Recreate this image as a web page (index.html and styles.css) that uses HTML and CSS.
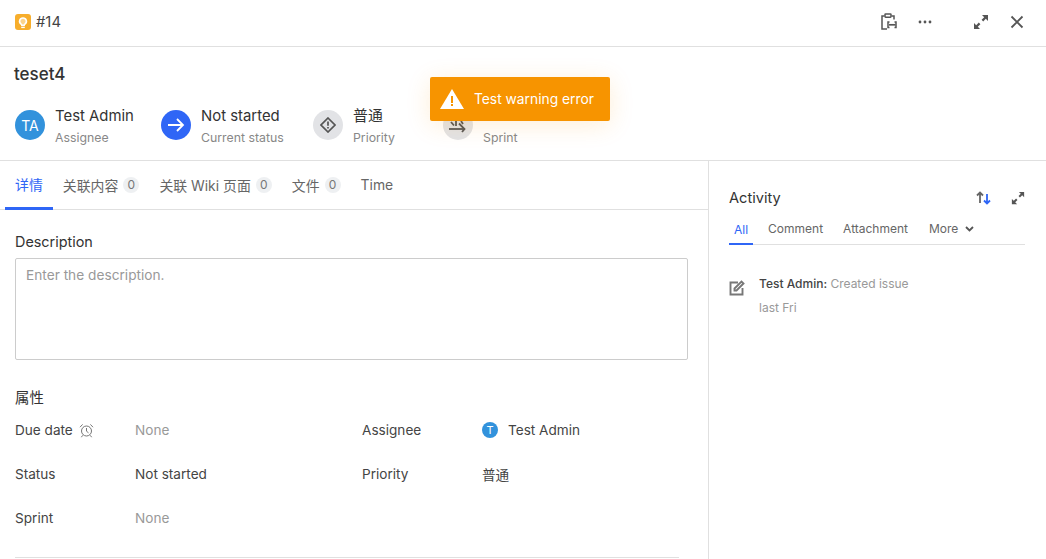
FILE: index.html
```html
<!DOCTYPE html>
<html lang="en">
<head>
    <meta charset="UTF-8">
    <meta name="viewport" content="width=device-width, initial-scale=1.0">
    <title>#14 teset4</title>
    <link rel="stylesheet" href="styles.css">
</head>
<body>
    <div class="topbar">
        <div class="issue-id">
            <span class="type-icon">
                <svg width="12" height="13" viewBox="0 0 12 13" fill="none" stroke="#fff"><path d="M6 2a3.3 3.3 0 0 0-2 6c.5.4.7.7.8 1.2h2.4c.1-.5.3-.8.8-1.2a3.3 3.3 0 0 0-2-6z" stroke-width="1.6" fill="#fbd48c"/><path d="M4.2 11.4h3.6" stroke-width="1.4"/></svg>
            </span>
            #14
        </div>
        <div class="top-actions">
            <svg class="act-clip" width="18" height="18" viewBox="0 0 18 18" fill="none" stroke="#555" stroke-width="1.5"><path d="M4.5 3H2v13h5"/><path d="M11.5 3H14v3.5"/><rect x="5" y="1" width="6" height="3.2" rx=".6"/><path d="M9.5 9H8v5.5h1.5M14.5 9H16v5.5h-1.5"/><path d="M9 11.8h6.5" stroke-width="1.7"/></svg>
            <svg class="act-more" width="14" height="4" viewBox="0 0 14 4" fill="#555"><circle cx="2" cy="2" r="1.4"/><circle cx="7" cy="2" r="1.4"/><circle cx="12" cy="2" r="1.4"/></svg>
            <svg class="act-expand" width="16" height="16" viewBox="0 0 16 16" fill="#555"><path d="M15 1v6l-2.2-2.2-2.6 2.6-1.6-1.6 2.6-2.6L9 1z"/><path d="M1 15V9l2.2 2.2 2.6-2.6 1.6 1.6-2.6 2.6L7 15z"/></svg>
            <svg class="act-close" width="14" height="14" viewBox="0 0 14 14" stroke="#555" stroke-width="1.8"><path d="M1.5 1.5l11 11M12.5 1.5l-11 11"/></svg>
        </div>
    </div>

    <div class="summary">
        <h1>teset4</h1>
        <div class="meta-row">
            <div class="meta meta-assignee">
                <span class="meta-icon bg-avatar">TA</span>
                <div class="meta-text"><div class="meta-value">Test Admin</div><div class="meta-label">Assignee</div></div>
            </div>
            <div class="meta meta-status">
                <span class="meta-icon bg-blue">
                    <svg width="18" height="16" viewBox="0 0 18 16" fill="none" stroke="#fff" stroke-width="1.8"><path d="M1 8h15M10 2l6 6-6 6"/></svg>
                </span>
                <div class="meta-text"><div class="meta-value">Not started</div><div class="meta-label">Current status</div></div>
            </div>
            <div class="meta meta-priority">
                <span class="meta-icon bg-grey">
                    <svg width="16" height="16" viewBox="0 0 16 16" fill="none" stroke="#555" stroke-width="1.7"><path d="M8 1l7 7-7 7-7-7z"/><path d="M8 4.5v4.2M8 10v1.6"/></svg>
                </span>
                <div class="meta-text"><div class="meta-value">普通</div><div class="meta-label">Priority</div></div>
            </div>
            <div class="meta meta-sprint">
                <span class="meta-icon bg-grey">
                    <svg width="20" height="18" viewBox="0 0 20 18" fill="none" stroke="#555" stroke-width="1.8"><path d="M1 13h15"/><path d="M11 7.5l5.5 5.5-2.5 3"/><path d="M3 6l3 3.5M8 5v5M13 5l2 3"/></svg>
                </span>
                <div class="meta-text"><div class="meta-value">&nbsp;</div><div class="meta-label">Sprint</div></div>
            </div>
        </div>
    </div>

    <div class="toast">
        <svg width="24" height="20" viewBox="0 0 24 20"><path d="M12 0l12 20H0z" fill="#fff"/><path d="M11 7h2v7h-2zM11 15h2v2h-2z" fill="#f79400"/></svg>
        <span>Test warning error</span>
    </div>

    <div class="columns">
        <div class="main">
            <div class="tabs">
                <div class="tab active">详情</div>
                <div class="tab">关联内容<span class="count">0</span></div>
                <div class="tab">关联 Wiki 页面<span class="count">0</span></div>
                <div class="tab">文件<span class="count">0</span></div>
                <div class="tab">Time</div>
            </div>
            <div class="main-body">
                <div class="section-title">Description</div>
                <div class="desc-box">Enter the description.</div>
                <div class="section-title attrs-title">属性</div>
                <div class="attrs">
                    <div class="attr-key">Due date
                        <svg width="15" height="15" viewBox="0 0 15 15" fill="none" stroke="#666" stroke-width=".9"><circle cx="7.5" cy="8" r="5"/><path d="M7.5 5v3.2l2 1.6M1 4.2l2.6-2.8M14 4.2l-2.6-2.8M3.6 12.4l-1.2 1.8M11.4 12.4l1.2 1.8"/></svg>
                    </div>
                    <div class="attr-val muted">None</div>
                    <div class="attr-key">Assignee</div>
                    <div class="attr-val"><span class="mini-avatar">T</span>Test Admin</div>
                    <div class="attr-key">Status</div>
                    <div class="attr-val">Not started</div>
                    <div class="attr-key">Priority</div>
                    <div class="attr-val">普通</div>
                    <div class="attr-key">Sprint</div>
                    <div class="attr-val muted">None</div>
                </div>
                <div class="divider"></div>
            </div>
        </div>
        <div class="side">
            <div class="side-head">
                <span class="side-title">Activity</span>
                <div class="side-actions">
                    <svg width="16" height="14" viewBox="0 0 16 14" fill="none" stroke-width="1.8"><path d="M4 12V2M1 4.5l3-3 3 3" stroke="#666"/><path d="M11 3v9.5M8 9.5l3 3 3-3" stroke="#2f66f6"/></svg>
                    <svg width="14" height="14" viewBox="0 0 16 16" fill="#555"><path d="M15 1v6l-2.2-2.2-2.6 2.6-1.6-1.6 2.6-2.6L9 1z"/><path d="M1 15V9l2.2 2.2 2.6-2.6 1.6 1.6-2.6 2.6L7 15z"/></svg>
                </div>
            </div>
            <div class="side-tabs">
                <div class="side-tab active">All</div>
                <div class="side-tab">Comment</div>
                <div class="side-tab">Attachment</div>
                <div class="side-tab">More
                    <svg width="9" height="6" viewBox="0 0 9 6" fill="none" stroke="#555" stroke-width="1.8"><path d="M1 1l3.5 3.5L8 1"/></svg>
                </div>
            </div>
            <div class="activity">
                <svg width="16" height="16" viewBox="0 0 16 16" fill="none" stroke="#777" stroke-width="1.9"><path d="M9 2.5H1.5v12h12V8"/><path d="M5.5 8.5L12.5 1.5l2 2-7 7H5.5z"/></svg>
                <div>
                    <div class="activity-line"><b>Test Admin:</b> Created issue</div>
                    <div class="activity-time">last Fri</div>
                </div>
            </div>
        </div>
    </div>
</body>
</html>
```

FILE: styles.css
```css
html, body {
    height: 100%;
}
body {
    margin: 0;
    font-family: Inter, "Noto Sans CJK SC", sans-serif;
    font-size: 14px;
    color: #333;
    background: #fff;
    overflow: hidden;
    position: relative;
}
.topbar {
    height: 44px;
    padding: 0 22px 2px 15px;
    border-bottom: 1px solid #e0e0e0;
    display: flex;
    align-items: center;
    justify-content: space-between;
}
.issue-id {
    display: flex;
    align-items: center;
    gap: 5px;
    font-size: 14.8px;
    color: #444;
}
.type-icon {
    width: 16px;
    height: 16px;
    background: #f7ae2c;
    border-radius: 3px;
    display: flex;
    align-items: center;
    justify-content: center;
}
.top-actions {
    display: flex;
    align-items: center;
}
.act-more {
    margin-left: 20px;
}
.act-expand {
    margin-left: 41px;
}
.act-close {
    margin-left: 21px;
}
.summary {
    height: 113px;
    border-bottom: 1px solid #e0e0e0;
    padding: 0 14px;
}
h1 {
    margin: 0;
    padding-top: 16px;
    font-size: 17px;
    line-height: 22px;
    font-weight: 500;
    color: #333;
}
.meta-row {
    display: flex;
    margin-top: 19px;
    padding-left: 1px;
}
.meta {
    display: flex;
    align-items: center;
    gap: 10px;
}
.meta-assignee {
    width: 146px;
}
.meta-status {
    width: 152px;
}
.meta-priority {
    width: 130px;
}
.meta-icon {
    width: 30px;
    height: 30px;
    border-radius: 50%;
    display: flex;
    align-items: center;
    justify-content: center;
    flex: none;
}
.bg-avatar {
    background: #3292dc;
    color: #fff;
    font-size: 14px;
}
.bg-blue {
    background: #2f66f6;
}
.bg-grey {
    background: #e2e3e6;
}
.meta-text {
    padding-top: 2px;
}
.meta-value {
    font-size: 14.9px;
    line-height: 20px;
    color: #333;
}
.meta-label {
    font-size: 12.3px;
    line-height: 16px;
    margin-top: 4px;
    color: #888;
}
.toast {
    position: absolute;
    left: 430px;
    top: 77px;
    width: 180px;
    height: 44px;
    box-sizing: border-box;
    padding-left: 10px;
    background: #f79400;
    border-radius: 2px;
    color: #fff;
    font-size: 13.8px;
    display: flex;
    align-items: center;
    gap: 10px;
    box-shadow: 0 4px 24px rgba(247, 148, 0, 0.16);
}
.columns {
    display: flex;
    height: 398px;
}
.main {
    width: 708px;
    flex: none;
    border-right: 1px solid #e0e0e0;
}
.tabs {
    display: flex;
    height: 48px;
    padding-left: 5px;
    border-bottom: 1px solid #e0e0e0;
}
.tab {
    padding: 0 10px 2px;
    display: flex;
    align-items: center;
    font-size: 13.9px;
    color: #666;
    margin-bottom: -1px;
}
.tab.active {
    color: #2f66f6;
    border-bottom: 3px solid #2f66f6;
    padding-bottom: 0;
}
.count {
    margin-left: 5px;
    width: 16px;
    height: 16px;
    border-radius: 50%;
    background: #eef0f2;
    color: #777;
    font-size: 12px;
    text-align: center;
    line-height: 16px;
}
.main-body {
    padding: 23px 20px 0 15px;
}
.section-title {
    font-size: 14.4px;
    line-height: 18px;
    color: #333;
}
.desc-box {
    margin-top: 7px;
    height: 102px;
    box-sizing: border-box;
    border: 1px solid #ccc;
    border-radius: 2px;
    padding: 7px 10px;
    font-size: 13.7px;
    line-height: 18px;
    color: #999;
    width: 673px;
}
.attrs-title {
    margin-top: 29px;
}
.attrs {
    margin-top: 1px;
    display: grid;
    grid-template-columns: 120px 227px 120px 1fr;
    grid-auto-rows: 44px;
}
.attr-key, .attr-val {
    display: flex;
    align-items: center;
    gap: 6px;
    font-size: 13.6px;
    color: #444;
}
.muted {
    color: #999;
}
.mini-avatar {
    width: 16px;
    height: 16px;
    border-radius: 50%;
    background: #3292dc;
    color: #fff;
    font-size: 11px;
    display: flex;
    align-items: center;
    justify-content: center;
    margin-right: 4px;
}
.divider {
    margin-top: 17px;
    border-top: 1px solid #e0e0e0;
    width: 664px;
}
.side {
    flex: 1;
    padding: 0 21px 0 20px;
}
.side-head {
    display: flex;
    align-items: center;
    justify-content: space-between;
    padding-top: 27px;
}
.side-title {
    font-size: 14.6px;
    line-height: 20px;
}
.side-actions {
    display: flex;
    align-items: center;
    gap: 19px;
}
.side-tabs {
    display: flex;
    margin-top: 10px;
    height: 26px;
    border-bottom: 1px solid #e0e0e0;
}
.side-tab {
    font-size: 12px;
    color: #666;
    padding: 0 5px 5px;
    margin-right: 10px;
    display: flex;
    align-items: center;
    gap: 7px;
    height: 26px;
    box-sizing: border-box;
}
.side-tab.active {
    color: #2f66f6;
    border-bottom: 2px solid #2f66f6;
    padding-bottom: 3px;
    height: 27px;
}
.side-tab:last-child {
    margin-left: 1px;
}
.activity {
    display: flex;
    gap: 14px;
    margin-top: 29px;
}
.activity svg {
    margin-top: 6px;
}
.activity-line {
    font-size: 12px;
    line-height: 20px;
    color: #999;
}
.activity-line b {
    font-weight: 500;
    color: #444;
}
.activity-time {
    margin-top: 4px;
    font-size: 12px;
    line-height: 20px;
    color: #999;
}
```
